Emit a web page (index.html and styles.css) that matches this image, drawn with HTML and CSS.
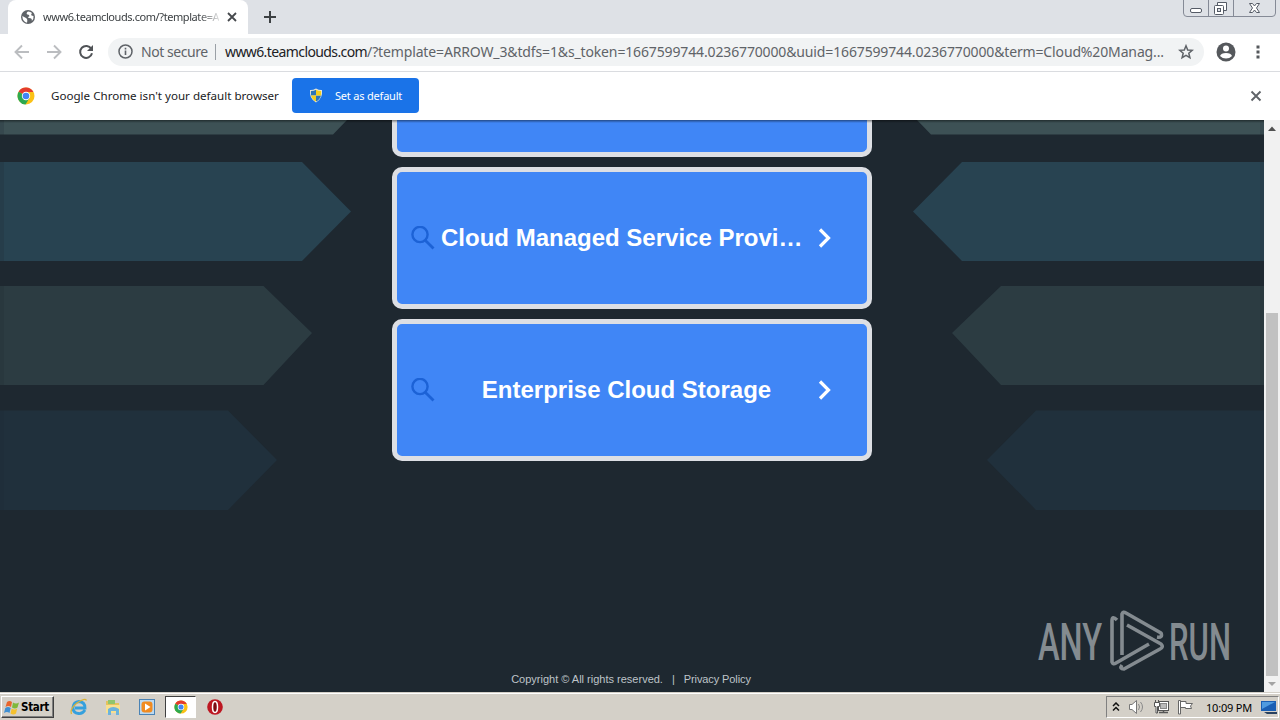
FILE: index.html
```html
<!DOCTYPE html>
<html lang="en">
<head>
    <meta charset="UTF-8">
    <title>www6.teamclouds.com</title>
    <link rel="stylesheet" href="styles.css">
</head>
<body>
    <svg class="defs" width="0" height="0">
        <symbol id="chrome" viewBox="0 0 18 18">
            <circle cx="9" cy="9" r="8.5" fill="#fbc116"/>
            <path d="M9 9 L1.6 4.8 A8.5 8.5 0 0 1 16.4 5 H9z" fill="#e33b2e"/>
            <path d="M9 9 L1.6 4.8 A8.5 8.5 0 0 0 8.5 17.5 L12.5 11z" fill="#2da94f"/>
            <circle cx="9" cy="9" r="4.2" fill="#fff"/>
            <circle cx="9" cy="9" r="3.3" fill="#4285f4"/>
        </symbol>
        <symbol id="search" viewBox="0 0 24 24">
            <circle cx="9" cy="8.5" r="7.6" fill="none" stroke="#1c62d6" stroke-width="2.4"/>
            <path d="M14.2 14.2 L22.5 22.5" stroke="#1c62d6" stroke-width="2.8"/>
        </symbol>
        <symbol id="chevron" viewBox="0 0 14 20">
            <path d="M2 1.5 L10.5 10 L2 18.5" fill="none" stroke="#fff" stroke-width="3.2"/>
        </symbol>
    </svg>

    <header class="tabstrip">
        <div class="tab">
            <svg class="globe" width="14" height="14" viewBox="0 0 14 14">
                <circle cx="7" cy="7" r="7" fill="#5f6368"/>
                <path d="M1.3 6 L5 8 Q7 9 6 12.7 Q1.6 11.8 1.3 6z M7 1.4 Q4.6 3.2 6.4 4.5 Q8.8 4.4 8.3 6.4 Q6 7 8 8 Q11.5 8 10.8 11 Q13 9 12.5 6 L10.5 5.5 Q9.6 4 11 3 Q9.4 1.3 7 1.4z" fill="#fff"/>
            </svg>
            <span class="tab-title">www6.teamclouds.com/?template=A</span>
            <svg class="tab-close" width="10" height="10" viewBox="0 0 10 10"><path d="M1 1 L9 9 M9 1 L1 9" stroke="#45484c" stroke-width="1.8"/></svg>
        </div>
        <svg class="new-tab" width="12" height="12" viewBox="0 0 12 12"><path d="M6 0 V12 M0 6 H12" stroke="#3c4043" stroke-width="2"/></svg>
        <svg class="window-buttons" width="94" height="18" viewBox="0 0 94 18">
            <path d="M.5 -1 V13 Q.5 16.5 4 16.5 H89 Q92.5 16.5 92.5 13 V-1 M25.5 0 V16 M50.5 0 V16" fill="none" stroke="#858a96"/>
            <rect x="7.5" y="8.5" width="11" height="4" rx="1.5" fill="#fff" stroke="#555b66"/>
            <path d="M34.5 5.5 V2.5 H43.5 V10.5 H40.5" fill="#fff" stroke="#555b66"/>
            <rect x="31.5" y="5.5" width="9" height="9" rx="1" fill="#fff" stroke="#555b66"/>
            <rect x="34.5" y="8.5" width="3" height="3" fill="#dee1e6" stroke="#555b66"/>
            <path d="M66.5 3.5 h3 l2 2.5 l2 -2.5 h3 l-3 4.5 l3 4.5 h-3 l-2 -2.5 l-2 2.5 h-3 l3 -4.5z" fill="#fff" stroke="#555b66"/>
        </svg>
    </header>

    <nav class="toolbar">
        <svg class="nav-icon" width="16" height="16" viewBox="0 0 16 16"><path d="M15 8 H2 M8 1.5 L1.5 8 L8 14.5" fill="none" stroke="#bbbdc0" stroke-width="1.9"/></svg>
        <svg class="nav-icon" width="16" height="16" viewBox="0 0 16 16"><path d="M1 8 H14 M8 1.5 L14.5 8 L8 14.5" fill="none" stroke="#bbbdc0" stroke-width="1.9"/></svg>
        <svg class="nav-icon" width="16" height="16" viewBox="0 0 16 16">
            <path d="M13.3 4.8 A6 6 0 1 0 14 9.3" fill="none" stroke="#505357" stroke-width="2"/>
            <path d="M15 1 V7 H9z" fill="#505357"/>
        </svg>
        <div class="omnibox">
            <svg width="15" height="15" viewBox="0 0 15 15"><circle cx="7.5" cy="7.5" r="6.5" fill="none" stroke="#5f6368" stroke-width="1.5"/><path d="M7.5 6.5 V11 M7.5 3.8 V5.4" stroke="#5f6368" stroke-width="1.6"/></svg>
            <span class="not-secure">Not secure</span>
            <span class="divider"></span>
            <span class="url"><span class="host">www6.teamclouds.com</span><span class="path">/?template=ARROW_3&amp;tdfs=1&amp;s_token=1667599744.0236770000&amp;uuid=1667599744.0236770000&amp;term=Cloud%20Manag...</span></span>
            <svg class="star" width="16" height="16" viewBox="0 0 16 16"><path d="M8 1.8 L9.7 6 L14.2 6.3 L10.8 9.2 L11.9 13.7 L8 11.3 L4.1 13.7 L5.2 9.2 L1.8 6.3 L6.3 6z" fill="none" stroke="#5f6368" stroke-width="1.5"/></svg>
        </div>
        <svg class="avatar" width="20" height="20" viewBox="0 0 20 20">
            <circle cx="10" cy="10" r="9.5" fill="#55585c"/>
            <circle cx="10" cy="6.5" r="3" fill="#fff"/>
            <path d="M4 14 Q5 11 10 11 Q15 11 16 14 Q13.5 16.6 10 16.6 Q6.5 16.6 4 14z" fill="#fff"/>
        </svg>
        <svg class="menu" width="4" height="14" viewBox="0 0 4 14"><path d="M.5 .5 h3 v3 h-3z M.5 5.5 h3 v3 h-3z M.5 10.5 h3 v3 h-3z" fill="#55585c"/></svg>
    </nav>

    <section class="infobar">
        <svg width="18" height="18"><use href="#chrome"/></svg>
        <span class="info-text">Google Chrome isn't your default browser</span>
        <button class="default-button">
            <svg width="14" height="15" viewBox="0 0 14 15">
                <path d="M7 .5 Q10 2.2 13 2 Q14 10.5 7 14.5 Q0 10.5 1 2 Q4 2.2 7 .5z" fill="#e8e8d8"/>
                <path d="M7 1.7 V7.5 H1.9 V3 Q5 3 7 1.7z M7 7.5 H12 Q11 11.5 7 13.5z" fill="#2b74b8"/>
                <path d="M7 1.7 Q9 3 12.1 3 V7.5 H7z M7 7.5 V13.5 Q3 11.5 2 7.5z" fill="#f2cd1d"/>
            </svg>
            <span>Set as default</span>
        </button>
        <svg class="info-close" width="12" height="12" viewBox="0 0 12 12"><path d="M1.5 1.5 L10.5 10.5 M10.5 1.5 L1.5 10.5" stroke="#5f6368" stroke-width="1.9"/></svg>
    </section>

    <div class="viewport">
        <main class="page">
            <svg class="arrows" width="1264" height="572" viewBox="0 120 1264 572">
                <path d="M0 120 H347 L333 134.5 H0z M1264 120 H917 L931 134.5 H1264z" fill="#3d5155"/>
                <path d="M0 162 H302 L351 211.5 L302 261 H0z M1264 162 H962 L913 211.5 L962 261 H1264z" fill="#284351"/>
                <path d="M0 286 H263.5 L312 333 L263.5 385 H0z M1264 286 H1001 L952 333 L1001 385 H1264z" fill="#2c3c42"/>
                <path d="M0 410.5 H228 L277 460 L228 510 H0z M1264 410.5 H1036 L987 460 L1036 510 H1264z" fill="#20303c"/>
                <path d="M0 120 H4 V510 H0z M1260 120 H1264 V510 H1260z" fill="#1e2830" opacity=".2"/>
            </svg>
            <div class="cards">
                <a class="card card-cut"></a>
                <a class="card">
                    <svg width="24" height="24"><use href="#search"/></svg>
                    <span class="card-title card-title-long">Cloud Managed Service Provi…</span>
                    <svg width="14" height="20"><use href="#chevron"/></svg>
                </a>
                <a class="card">
                    <svg width="24" height="24"><use href="#search"/></svg>
                    <span class="card-title">Enterprise Cloud Storage</span>
                    <svg width="14" height="20"><use href="#chevron"/></svg>
                </a>
            </div>
            <footer class="footer"><span class="copyright">Copyright © All rights reserved.</span><span>|</span><span class="privacy">Privacy Policy</span></footer>
            <div class="watermark">
                <svg width="70" height="72" viewBox="1035 605 70 72">
                    <text class="brand" x="1038" y="659.5" textLength="64" lengthAdjust="spacingAndGlyphs">ANY</text>
                </svg>
                <svg width="60" height="72" viewBox="1107 605 60 72">
                    <g fill="none" stroke="#848b90" stroke-width="3.6" stroke-linejoin="round">
                        <path d="M1117 620 Q1112 615 1112 621 V662 Q1113 665 1116 663 L1149 644"/>
                        <path d="M1122 655 V614 Q1123 611 1126 613 L1161 633 Q1163 638 1157 637"/>
                        <path d="M1127 625 L1161 644 Q1164 647 1160 649 L1124 669 Q1119 669 1122 665"/>
                    </g>
                </svg>
                <svg width="70" height="72" viewBox="1166 605 70 72">
                    <text class="brand" x="1169" y="659.5" textLength="62" lengthAdjust="spacingAndGlyphs">RUN</text>
                </svg>
            </div>
        </main>
        <div class="scrollbar">
            <svg width="16" height="16" viewBox="0 0 16 16"><path d="M4 11 L8 6.5 L12 11z" fill="#505050"/></svg>
            <div class="thumb"></div>
            <svg width="16" height="16" viewBox="0 0 16 16"><path d="M4 6 L8 10 L12 6z" fill="#a3a3a3"/></svg>
        </div>
    </div>

    <footer class="taskbar">
        <div class="start">
            <svg width="16" height="15" viewBox="0 0 16 15">
                <path d="M3 2 Q5.5 0 8 2 L7 7 Q4.5 5 1.5 7z" fill="#e8652c"/>
                <path d="M9 2.5 Q12 4.5 15 2.5 L13.5 7.5 Q11 9.5 8 7.5z" fill="#7fb83b"/>
                <path d="M1.3 8 Q4 6 6.7 8 L5.5 13 Q3 11 0 13z" fill="#3f8fd2"/>
                <path d="M7.7 8.5 Q10.5 10.5 13.2 8.5 L12 13.5 Q9.5 15.5 6.5 13.5z" fill="#f5c12e"/>
            </svg>
            <span>Start</span>
        </div>
        <div class="quick">
            <svg width="18" height="18" viewBox="0 0 18 18">
                <path d="M15 12 Q12.5 16 8.5 15.5 Q3 15 3 9.5 Q3.5 4 9 3.5 Q15 4 15 10 H5" fill="none" stroke="#35a0dd" stroke-width="2.8"/>
                <path d="M1.5 16 Q-.5 11 7 5 Q15 -.5 16.5 2.5" fill="none" stroke="#dbb338" stroke-width="1.3"/>
            </svg>
            <svg width="18" height="18" viewBox="0 0 18 18">
                <path d="M2 3 H7 L8 5 H15 V14 H2z" fill="#e5c25c"/>
                <path d="M4 2 H11 V6 H4z" fill="#8fc56d"/>
                <path d="M2 7 H16 V15 H2z" fill="#f8e090"/>
                <path d="M4 17 V11 Q9 7 15 11 V17 H12 V13 H7 V17z" fill="#6cb3dc"/>
            </svg>
            <svg width="18" height="18" viewBox="0 0 18 18">
                <rect x="1.5" y="1.5" width="15" height="15" fill="#bcd9f0" stroke="#4a83b5"/>
                <rect x="3.5" y="3.5" width="11" height="11" rx="3" fill="#f18b20"/>
                <path d="M7 5.5 L12.5 9 L7 12.5z" fill="#fff"/>
            </svg>
            <div class="active-task"><svg width="14" height="14"><use href="#chrome"/></svg></div>
            <svg width="18" height="18" viewBox="0 0 18 18">
                <circle cx="9" cy="9" r="7.8" fill="#bd1722"/>
                <ellipse cx="9" cy="9" rx="2.5" ry="5.5" fill="#7d0b13" stroke="#fff" stroke-width="1.5"/>
            </svg>
        </div>
        <div class="tray">
            <svg width="8" height="10" viewBox="0 0 8 10"><path d="M1 4 L4 1 L7 4 M1 8.5 L4 5.5 L7 8.5" fill="none" stroke="#111" stroke-width="1.5"/></svg>
            <svg width="17" height="16" viewBox="0 0 17 16">
                <path d="M1.5 5.5 H4 L8.5 1.5 V14.5 L4 10.5 H1.5z" fill="#fff" stroke="#777"/>
                <path d="M10.5 5 Q12.5 8 10.5 11 M12.5 3 Q16.5 8 12.5 13" fill="none" stroke="#888"/>
            </svg>
            <svg width="16" height="16" viewBox="0 0 16 16">
                <rect x="5.5" y="2.5" width="10" height="9" fill="#fff" stroke="#555"/>
                <rect x="7.5" y="4.5" width="6" height="5" fill="#bbb" stroke="#888"/>
                <path d="M6 13.5 H15 M10.5 12 V14" stroke="#555" stroke-width="1.5"/>
                <path d="M1.5 3.5 H6.5 V7.5 H4.5 V14 H3 V7.5 H1.5z M2.5 1 V3 M5.5 1 V3" fill="#fff" stroke="#555"/>
            </svg>
            <svg width="17" height="16" viewBox="0 0 17 16"><path d="M1.5 1.5 H3.5 V15 H1.5z M3.5 2.5 H9 V4.5 H15.5 L13.5 7 L14.5 9.5 H8.5 V8.5 H3.5z" fill="#fff" stroke="#666"/></svg>
            <span class="clock">10:09 PM</span>
            <svg width="16" height="15" viewBox="0 0 16 15">
                <path d="M0 1 H15 V11 H0z" fill="#1a5fb4"/>
                <path d="M1 2 H14 L1 9z" fill="#4f9be0"/>
                <path d="M3 12 H16 V14 H6z" fill="#28415f"/>
            </svg>
        </div>
    </footer>
</body>
</html>
```

FILE: styles.css
```css
* {
    box-sizing: border-box;
}

body {
    margin: 0;
    width: 1280px;
    height: 720px;
    overflow: hidden;
    display: flex;
    flex-direction: column;
    background: #fff;
    font-family: "Noto Sans", Tahoma, sans-serif;
    font-size: 11px;
}

svg {
    display: block;
    flex: none;
}

.defs {
    position: absolute;
}

.tabstrip {
    height: 34px;
    flex: none;
    display: flex;
    align-items: flex-start;
    background: #dee1e6;
    padding-left: 8px;
}

.tab {
    width: 240px;
    height: 34px;
    display: flex;
    align-items: center;
    padding: 0 11px 1px 13px;
    background: #fff;
    border-radius: 8px 8px 0 0;
}

.tab-title {
    width: 176px;
    margin: 0 8px 0 8px;
    white-space: nowrap;
    letter-spacing: -0.42px;
    color: #3c4043;
    -webkit-mask-image: linear-gradient(to right, #000 155px, transparent 180px);
}

.new-tab {
    margin: 11px 0 0 16px;
}

.window-buttons {
    margin-left: auto;
    margin-right: 3px;
}

.toolbar {
    height: 38px;
    flex: none;
    display: flex;
    align-items: center;
    padding: 0 20px 2px 14px;
    border-bottom: 1px solid #dadce0;
}

.nav-icon {
    margin-right: 16px;
}

.omnibox {
    width: 1096px;
    height: 28px;
    margin-left: -2px;
    padding: 0 10px;
    display: flex;
    align-items: center;
    border-radius: 14px;
    background: #f1f3f4;
    font-size: 14px;
    white-space: nowrap;
}

.not-secure {
    margin-left: 8px;
    width: 67px;
    letter-spacing: -0.45px;
    color: #5f6368;
}

.divider {
    width: 1px;
    height: 16px;
    margin: 0 9px 0 7px;
    background: #9aa0a6;
}

.url {
    width: 940px;
    letter-spacing: -0.14px;
    color: #5f6368;
}

.host {
    letter-spacing: -0.6px;
    color: #202124;
}

.star {
    margin-left: auto;
}

.avatar {
    margin-left: 12px;
}

.menu {
    margin-left: auto;
}

.infobar {
    height: 48px;
    flex: none;
    display: flex;
    align-items: center;
    padding: 0 18px 1px 17px;
    color: #202124;
}

.info-text {
    width: 229px;
    margin-left: 16px;
    white-space: nowrap;
    font-size: 11.6px;
}

.default-button {
    width: 127px;
    height: 35px;
    margin-left: 12px;
    padding: 0 0 0 17px;
    display: flex;
    align-items: center;
    gap: 12px;
    border: none;
    border-radius: 4px;
    background: #1a73e8;
    color: #fff;
    font: inherit;
    letter-spacing: -0.2px;
    white-space: nowrap;
}

.info-close {
    margin-left: auto;
}

.viewport {
    height: 572px;
    flex: none;
    display: flex;
}

.page {
    position: relative;
    width: 1264px;
    overflow: hidden;
    background: #1e2830;
}

/* shadow of the infobar over the page */
.page::after {
    content: "";
    position: absolute;
    top: 0;
    left: 0;
    right: 0;
    height: 3px;
    background: linear-gradient(rgba(0, 0, 0, 0.45), transparent);
}

.arrows {
    position: absolute;
    top: 0;
    left: 0;
}

.cards {
    position: relative;
    width: 480px;
    margin: 0 auto;
    display: flex;
    flex-direction: column;
    gap: 10px;
}

.card {
    height: 142px;
    display: flex;
    align-items: center;
    padding: 0 35px 0 14px;
    border: 5px solid #dddfe4;
    border-radius: 10px;
    background: #4086f6;
}

.card-cut {
    height: 37px;
    border-top: none;
    border-radius: 0 0 10px 10px;
}

.card-title {
    flex: 1;
    font: bold 24px "Liberation Sans", Arial, sans-serif;
    text-align: center;
    white-space: nowrap;
    color: #fff;
}

.card-title-long {
    padding-left: 6px;
    text-align: left;
}

.footer {
    position: absolute;
    top: 553px;
    left: 0;
    width: 1262px;
    display: flex;
    justify-content: center;
    gap: 9px;
    font: 11px "Liberation Sans", Arial, sans-serif;
    color: #bfc4c9;
}

.privacy {
    letter-spacing: -0.1px;
}

.watermark {
    position: absolute;
    left: 1035px;
    top: 485px;
    display: grid;
    grid-template-columns: 72px 59px 70px;
}

.brand {
    font: 500 52px Roboto, sans-serif;
    fill: #848b90;
}

.scrollbar {
    width: 16px;
    display: flex;
    flex-direction: column;
    background: #f1f1f1;
}

.thumb {
    width: 12px;
    height: 363px;
    margin: auto 2px 0;
    background: #c1c1c1;
}

.taskbar {
    height: 28px;
    display: flex;
    align-items: center;
    padding: 1px 1px 0 1px;
    background: #d4d0c8;
    border-top: 1px solid #d4d0c8;
    box-shadow: inset 0 1px 0 #fff;
    color: #000;
}

.start {
    width: 53px;
    height: 22px;
    display: flex;
    align-items: center;
    gap: 1px;
    padding-left: 2px;
    border: 1px solid;
    border-color: #fff #404040 #404040 #fff;
    box-shadow: inset -1px -1px #808080;
    font: bold 11.5px "DejaVu Sans Condensed", Tahoma, sans-serif;
    letter-spacing: -0.3px;
}

.quick {
    display: flex;
    align-items: center;
    gap: 16px;
    margin-left: 16px;
}

.active-task {
    width: 31px;
    height: 22px;
    margin: 0 -6px 0 -7px;
    display: flex;
    align-items: center;
    justify-content: center;
    background: #fff;
    border: 1px solid;
    border-color: #404040 #fff #fff #404040;
}

.tray {
    width: 173px;
    height: 22px;
    margin-left: auto;
    padding: 0 1px 0 5px;
    display: flex;
    align-items: center;
    gap: 8px;
    border: 1px solid;
    border-color: #808080 #fff #fff #808080;
}

.clock {
    width: 46px;
    margin: 0 auto 0 4px;
    white-space: nowrap;
    letter-spacing: -0.2px;
}
```
